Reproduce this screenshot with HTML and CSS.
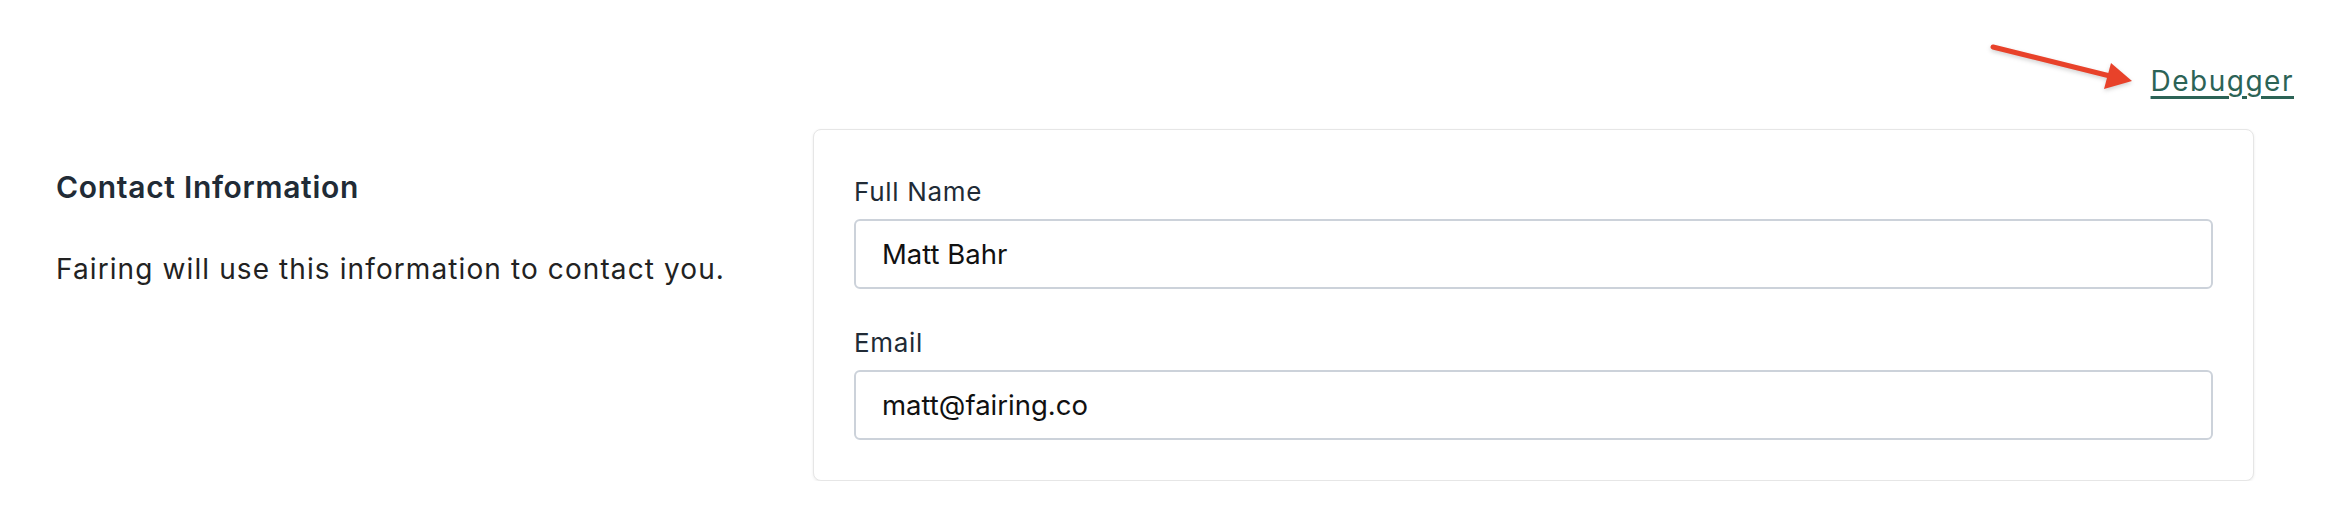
FILE: index.html
```html
<!DOCTYPE html>
<html lang="en">
<head>
  <meta charset="UTF-8" />
  <meta name="viewport" content="width=device-width, initial-scale=1.0"/>
  <title>Contact Information</title>
  <link rel="stylesheet" href="styles.css">
</head>
<body>
  <div class="topbar">
    <div class="debug-link">
      <svg class="arrow" width="150" height="56" viewBox="0 0 150 56">
        <line x1="7" y1="8" x2="124" y2="37" stroke="#e8422a" stroke-width="5" stroke-linecap="round"/>
        <polygon points="125,24 146,42 118,50" fill="#e8422a"/>
      </svg>
      <a href="#">Debugger</a>
    </div>
  </div>

  <div class="section">
    <div class="annotation">
      <h2>Contact Information</h2>
      <p>Fairing will use this information to contact you.</p>
    </div>

    <div class="card">
      <div class="field">
        <label for="name">Full Name</label>
        <input id="name" type="text" value="Matt Bahr">
      </div>
      <div class="field">
        <label for="email">Email</label>
        <input id="email" type="email" value="matt@fairing.co">
      </div>
    </div>
  </div>
</body>
</html>
```

FILE: styles.css
```css
body {
  margin: 0;
  font-family: Inter, "Noto Sans", sans-serif;
  background-color: #fff;
  color: #212b36;
}

.topbar {
  display: flex;
  justify-content: flex-end;
  padding: 61px 36px 0 0;
}

.debug-link {
  position: relative;
  font-size: 28px;
  line-height: 40px;
  letter-spacing: 1.5px;
}

.debug-link a {
  color: #2c6356;
  text-decoration: underline;
  text-decoration-thickness: 3px;
  text-underline-offset: 5px;
}

.arrow {
  position: absolute;
  right: calc(100% + 15px);
  top: -22px;
  filter: drop-shadow(0 2px 2px rgba(0, 0, 0, 0.18));
}

.section {
  display: grid;
  grid-template-columns: 757px 1441px;
  padding-left: 56px;
  margin-top: 28px;
}

.annotation {
  padding-top: 40px;
}

.annotation h2 {
  margin: 0;
  font-size: 30px;
  line-height: 36px;
  font-weight: 600;
  letter-spacing: 0.7px;
  color: #212b36;
}

.annotation p {
  margin: 44px 0 0;
  font-size: 28px;
  line-height: 40px;
  letter-spacing: 1.1px;
  color: #222;
}

.card {
  box-sizing: border-box;
  padding: 40px;
  border: 1px solid #e6e6e6;
  border-radius: 8px;
  box-shadow: 0 1px 3px rgba(0, 0, 0, 0.08);
  background-color: #fff;
  display: flex;
  flex-direction: column;
  gap: 32px;
}

.field {
  display: flex;
  flex-direction: column;
  gap: 5px;
}

.field label {
  font-size: 26px;
  line-height: 44px;
  letter-spacing: 0.7px;
  color: #212b36;
}

.field input {
  box-sizing: border-box;
  height: 70px;
  padding: 0 26px;
  border: 2px solid #ccd2da;
  border-radius: 6px;
  font-family: Inter, "Noto Sans", sans-serif;
  font-size: 27.5px;
  color: #111;
  background-color: #fff;
  outline: none;
}
```
